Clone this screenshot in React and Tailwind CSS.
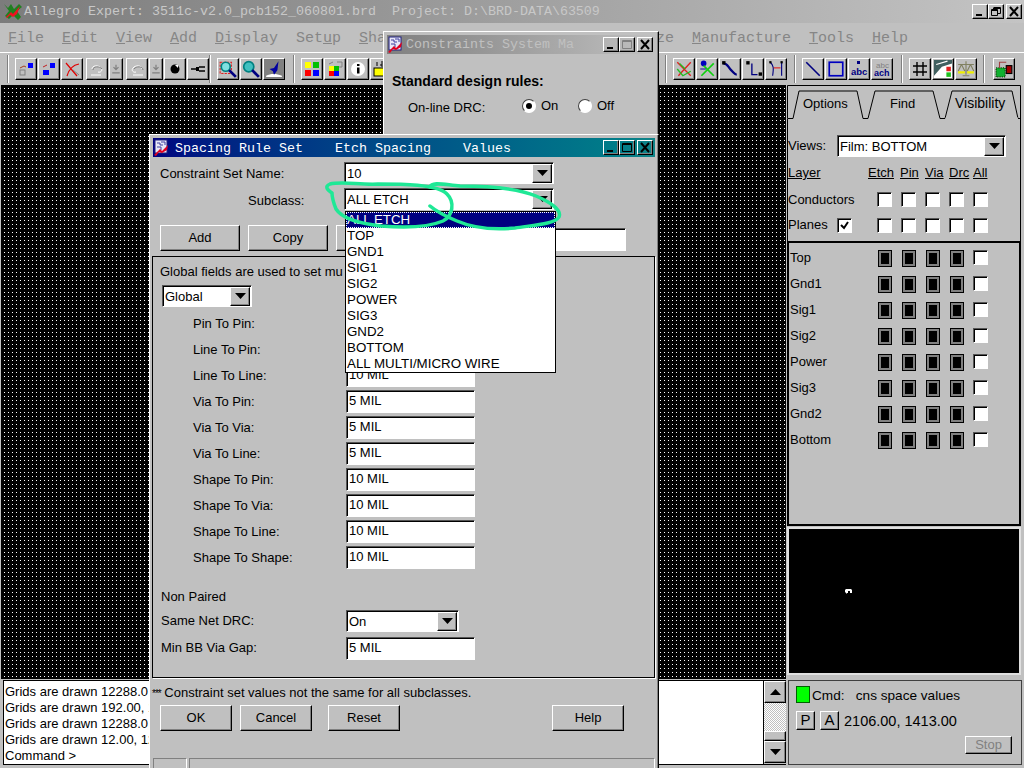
import React from 'react';

const raised = 'border border-t-white border-l-white border-r-black border-b-black shadow-[inset_-1px_-1px_0_#808080]';
const sunken = 'border border-t-[#555555] border-l-[#555555] border-r-white border-b-white shadow-[inset_1px_1px_0_#000000]';
const mono = "font-['Liberation_Mono',monospace]";

// the dialogs cover the middle of the menu, so only what shows is written out
const MENU = [
  ['File', 36], ['Edit', 36], ['View', 36], ['Add', 27], ['Display', 63], ['Setup', 45], ['Sha', 45], ['', 45], ['', 45], ['', 45], ['ze', 63],
  ['Manufacture', 99], ['Tools', 45], ['Help', 36],
];
const LAYERS = ['Top', 'Gnd1', 'Sig1', 'Sig2', 'Power', 'Sig3', 'Gnd2', 'Bottom'];
const SUBCLASSES = ['TOP', 'GND1', 'SIG1', 'SIG2', 'POWER', 'SIG3', 'GND2', 'BOTTOM', 'ALL MULTI/MICRO WIRE'];
const RULES = [
  ['Pin To Pin:', ''], ['Line To Pin:', ''], ['Line To Line:', '10 MIL'], ['Via To Pin:', '5 MIL'], ['Via To Via:', '5 MIL'],
  ['Via To Line:', '5 MIL'], ['Shape To Pin:', '10 MIL'], ['Shape To Via:', '10 MIL'], ['Shape To Line:', '10 MIL'], ['Shape To Shape:', '10 MIL'],
];
const LOG = ['Grids are drawn 12288.0', 'Grids are drawn 192.00, 1', 'Grids are drawn 12288.0', 'Grids are drawn 12.00, 12'];

function Ico({ children, size = 16 }) {
  return <svg width={size} height={size} viewBox="0 0 16 16" fill="none">{children}</svg>;
}

function Tool({ children, narrow, flat }) {
  return (
    <div className={`${narrow ? 'w-[14px]' : 'w-[22px]'} h-[22px] shrink-0 flex items-center justify-center ${raised} ${flat ? 'bg-[#808080]' : ''}`}>
      {children}
    </div>
  );
}

function Group({ w, children }) {
  return (
    <div style={{ width: w }} className="h-[28px] shrink-0 pl-[7px] flex items-center gap-px border-l border-l-[#808080] shadow-[inset_1px_0_0_#ffffff]">
      {children}
    </div>
  );
}

function WinBtn({ type, dim }) {
  const c = dim ? '#808080' : '#000000';
  return (
    <div className={`w-[16px] h-[15px] shrink-0 flex items-center justify-center ${raised}`}>
      <svg width="12" height="11" viewBox="0 0 12 11" fill="none">
        {type === 'min' && <rect x="2" y="8" width="6" height="2" fill="#000000" />}
        {type === 'max' && <path d="M1.5 1.5h9v8h-9zM1 2.5h10" stroke={c} />}
        {type === 'restore' && <path d="M3.5 1.5h7v6h-3M3 2.5h8M1.5 3.5h6v6h-6zM1 4.5h7" stroke="#000000" />}
        {type === 'close' && <path d="M2 1l8 9M10 1l-8 9" stroke="#000000" strokeWidth="2" />}
      </svg>
    </div>
  );
}

function DocIcon() {
  return (
    <svg width="18" height="18" viewBox="0 0 18 18" className="shrink-0">
      <rect x="2" y="1" width="12" height="13" fill="#e8e8f8" stroke="#202080" />
      <path d="M4 4h3v2h3M8 3h4v3M4 8h4v3" stroke="#4040a0" fill="none" />
      <path d="M1 16l6-6 2 2 6-6-1 5-5 3-3-1-3 4z" fill="#e00020" />
    </svg>
  );
}

function Arrow({ up }) {
  return (
    <svg width="11" height="6" viewBox="0 0 11 6">
      <path d={up ? 'M5.5 0L11 6H0z' : 'M0 0h11L5.5 6z'} fill="#000000" />
    </svg>
  );
}

function Combo({ w, value }) {
  return (
    <div style={{ width: w }} className={`h-[22px] shrink-0 bg-white flex items-center justify-between pl-[2px] pr-px ${sunken}`}>
      <span className="leading-none">{value}</span>
      <div className={`w-[20px] h-[19px] bg-[#c0c0c0] flex items-center justify-center ${raised}`}>
        <Arrow />
      </div>
    </div>
  );
}

function Btn({ w, children, className = '' }) {
  return (
    <div style={{ width: w }} className={`h-[26px] shrink-0 flex items-center justify-center ${raised} ${className}`}>
      {children}
    </div>
  );
}

function Check({ on }) {
  return (
    <div className={`w-[15px] h-[15px] shrink-0 bg-white flex items-center justify-center ${sunken}`}>
      {on && (
        <svg width="9" height="9" viewBox="0 0 9 9"><path d="M1 4l3 3 4-6" stroke="#000000" strokeWidth="2" fill="none" /></svg>
      )}
    </div>
  );
}

function Radio({ on }) {
  return (
    <div className="w-[14px] h-[14px] rounded-full bg-white border border-t-[#404040] border-l-[#404040] border-r-white border-b-white flex items-center justify-center">
      {on && <div className="w-[6px] h-[6px] rounded-full bg-black" />}
    </div>
  );
}

function ColorBox() {
  return (
    <div className="w-[14px] h-[17px] shrink-0 border border-black bg-[#808080] p-[2px]">
      <div className="w-full h-full bg-black" />
    </div>
  );
}

function MainToolbar() {
  return (
    <div className="h-[33px] flex items-center border-t border-t-white pl-[7px]">
      <Group w={202}>
        <Tool><Ico><rect x="10" y="2" width="5" height="5" fill="#0000ff" /><rect x="2" y="9" width="5" height="5" stroke="#808080" /><path d="M2 7l4-2 2 1" stroke="#a04020" /></Ico></Tool>
        <Tool><Ico><rect x="9" y="2" width="5" height="5" fill="#0000ff" /><rect x="2" y="9" width="6" height="5" fill="#0000ff" /><path d="M2 6l4-2" stroke="#c02020" /></Ico></Tool>
        <Tool><Ico><path d="M2 2l11 13M15 3C9 4 5 8 3 15" stroke="#e00000" strokeWidth="1.2" /><path d="M9 9l6 5" stroke="#808080" /></Ico></Tool>
        <div className="w-px" />
        <Tool><Ico><path d="M3 8c0-4 7-4 9-1 2 2 0 5-3 4M2 14h10" stroke="#ffffff" /><path d="M3 8c0-4 7-4 9-1" stroke="#808080" transform="translate(1 1)" /></Ico></Tool>
        <Tool narrow><Ico size={10}><path d="M8 1v7M4 5l4 4 4-4M2 14h12" stroke="#808080" strokeWidth="2" /></Ico></Tool>
        <div className="w-px" />
        <Tool><Ico><path d="M13 8c0-4-7-4-9-1-2 2 0 5 3 4M4 14h10" stroke="#ffffff" /><path d="M13 8c0-4-7-4-9-1" stroke="#808080" transform="translate(1 1)" /></Ico></Tool>
        <Tool narrow><Ico size={10}><path d="M8 1v7M4 5l4 4 4-4M2 14h12" stroke="#808080" strokeWidth="2" /></Ico></Tool>
        <Tool><Ico><circle cx="8" cy="8" r="4.5" fill="#000000" /><path d="M8 4h3v3z" fill="#ffffff" /></Ico></Tool>
        <Tool><Ico><path d="M1 8h5M9 6h6M9 10h6" stroke="#000000" strokeWidth="1.5" /><rect x="6" y="6" width="3" height="4" fill="#000000" /></Ico></Tool>
      </Group>
      <Group w={84}>
        <Tool><Ico size={18}><rect x="1" y="2" width="10" height="10" stroke="#e02020" strokeDasharray="2 1" /><circle cx="6" cy="6" r="4" stroke="#008080" strokeWidth="1.5" fill="#80e0e0" /><path d="M9 9l6 6" stroke="#000080" strokeWidth="2.5" /></Ico></Tool>
        <Tool><Ico size={18}><circle cx="6" cy="6" r="4.5" stroke="#008080" strokeWidth="1.5" fill="#40c0c0" /><path d="M9 9l6 6" stroke="#000080" strokeWidth="2.5" /></Ico></Tool>
        <Tool flat><Ico size={18}><path d="M1 14c4-2 9-2 14 0v1H1z" fill="#ffffff" /><path d="M12 1L8 7l-4 1 3 2 1 3 3-4z" fill="#0000a0" /></Ico></Tool>
      </Group>
      <Group w={372}>
        <Tool><Ico><rect x="1" y="1" width="6" height="6" fill="#ffff00" /><rect x="9" y="1" width="6" height="6" fill="#00c000" /><rect x="1" y="9" width="6" height="6" fill="#ff0000" /><rect x="9" y="9" width="6" height="6" fill="#0000ff" /></Ico></Tool>
        <Tool><Ico><rect x="2" y="5" width="5" height="5" fill="#ffff00" /><rect x="7" y="5" width="5" height="5" fill="#00c000" /><rect x="2" y="10" width="5" height="5" fill="#ff0000" /><rect x="7" y="10" width="5" height="5" fill="#0000ff" /><path d="M2 3l4-2M10 1h5v5h-3" stroke="#808080" /></Ico></Tool>
        <Tool><Ico><circle cx="8" cy="8" r="7" fill="#ffffff" /><rect x="7" y="3" width="2.5" height="2" fill="#000000" /><rect x="7" y="6.5" width="2.5" height="6" fill="#000000" /></Ico></Tool>
        <Tool><Ico><rect x="1" y="7" width="14" height="8" fill="#ffff00" stroke="#000000" /><path d="M4 1v4M8 1h3v2H8v2h3" stroke="#000000" /></Ico></Tool>
      </Group>
      <Group w={129}>
        <Tool><Ico size={18}><path d="M2 2l12 12M14 2L3 14" stroke="#e02020" strokeWidth="1.2" /><path d="M2 8l5 6 7-4M4 3l5 5" stroke="#20c020" strokeWidth="1.2" /></Ico></Tool>
        <Tool><Ico size={18}><circle cx="5" cy="3" r="2.5" fill="#0000c0" /><path d="M3 14L14 3M5 5l9 9" stroke="#10d010" strokeWidth="1.5" /><path d="M2 8h5" stroke="#2020a0" /></Ico></Tool>
        <Tool><Ico size={18}><path d="M2 3c4 0 4 3 7 6s3 4 5 4" stroke="#000080" strokeWidth="2" /><rect x="1" y="1" width="3" height="3" fill="#000000" /></Ico></Tool>
        <Tool><Ico size={18}><rect x="2" y="1" width="3" height="3" fill="#000000" /><path d="M7 3v10h5" stroke="#000080" strokeWidth="1.2" /><rect x="13" y="11" width="3" height="3" fill="#000000" /></Ico></Tool>
        <Tool><Ico size={18}><path d="M3 2c3 3 3 5 2 12M13 2v12" stroke="#000080" /><path d="M6 7h6" stroke="#e02020" /><rect x="2" y="1" width="2" height="2" fill="#000000" /><rect x="12" y="1" width="2" height="2" fill="#000000" /></Ico></Tool>
      </Group>
      <Group w={107}>
        <Tool><Ico size={18}><path d="M2 2l12 12" stroke="#000080" strokeWidth="1.4" /></Ico></Tool>
        <Tool><Ico size={18}><rect x="2" y="2" width="12" height="12" stroke="#0000c0" strokeWidth="1.5" /></Ico></Tool>
        <Tool><svg width="18" height="18" viewBox="0 0 18 18"><rect x="7" y="1" width="3" height="3" fill="#000080" /><text x="1" y="15" fontSize="9.5" fontWeight="700" fontFamily="Liberation Sans" fill="#000080">abc</text></svg></Tool>
        <Tool><svg width="18" height="18" viewBox="0 0 18 18"><text x="3" y="8" fontSize="8" fontFamily="Liberation Sans" fill="#808080">abc</text><text x="1" y="16" fontSize="9" fontWeight="700" fontFamily="Liberation Sans" fill="#000080">ach</text></svg></Tool>
      </Group>
      <Group w={82}>
        <Tool><Ico><path d="M5 1v14M11 1v14M1 5h14M1 11h14" stroke="#000000" strokeWidth="1.4" /></Ico></Tool>
        <Tool><Ico size={18}><rect x="0" y="0" width="16" height="16" fill="#ffffff" /><path d="M0 0h16v3l-9 3-7 8z" fill="#406060" /><path d="M2 4l10-3" stroke="#ffffff" /><rect x="11" y="6" width="4" height="4" fill="#e02020" /><rect x="11" y="11" width="4" height="4" fill="#20c020" /></Ico></Tool>
        <Tool><Ico size={18}><path d="M8 1v12M5 14h6M1 4h14M4 4l-3 6M4 4l3 6M12 4l-3 6M12 4l3 6" stroke="#808060" /><path d="M1 10h6v2H1zM9 10h6v2H9z" fill="#f0f000" /></Ico></Tool>
      </Group>
      <Group w={40}>
        <div className="w-px" />
        <Tool><Ico size={18}><rect x="1" y="7" width="8" height="8" fill="#10b030" stroke="#004000" strokeDasharray="1 1" /><rect x="10" y="5" width="5" height="7" fill="#a00000" stroke="#000000" /><path d="M4 7V2h6" stroke="#a04040" /></Ico></Tool>
      </Group>
    </div>
  );
}

function VisibilityPanel() {
  return (
    <div className="w-[238px] shrink-0 flex flex-col pl-px pr-[3px]">
      {/* tabs */}
      <div className="relative h-[34px] shrink-0">
        <svg className="absolute inset-0" width="234" height="34" viewBox="0 0 234 34" fill="none">
          <path d="M0.5 33.5H6L12 6H70L76 33.5H81L88 6H146L153 33.5H158L165 6H225L231 33.5H234" stroke="#000000" />
          <path d="M0.5 33.5V0.5H233.5V34" stroke="#000000" />
          <path d="M158.5 33.5H231" stroke="#c0c0c0" strokeWidth="2" />
        </svg>
        <div className="relative flex h-full pt-[9px] items-start">
          <span className="w-[78px] pl-[16px]">Options</span>
          <span className="w-[76px] pl-[25px]">Find</span>
          <span className="pl-[14px] text-[14px] leading-[18px]">Visibility</span>
        </div>
      </div>
      {/* filters */}
      <div className="h-[122px] shrink-0 border-x border-x-black pt-[16px] flex flex-col">
        <div className="flex items-center h-[22px]">
          <span className="w-[49px] shrink-0">Views:</span>
          <Combo w={169} value="Film: BOTTOM" />
        </div>
        <div className="flex items-center h-[26px] mt-[3px] underline">
          <span className="w-[80px]">Layer</span>
          <span className="w-[32px]">Etch</span>
          <span className="w-[25px]">Pin</span>
          <span className="w-[24px]">Via</span>
          <span className="w-[24px]">Drc</span>
          <span>All</span>
        </div>
        <div className="flex items-center h-[26px] pt-px">
          <span className="w-[89px] shrink-0">Conductors</span>
          <div className="flex gap-[9px]"><Check /><Check /><Check /><Check /><Check /></div>
        </div>
        <div className="flex items-center h-[26px]">
          <span className="w-[49px] shrink-0">Planes</span>
          <div className="w-[40px]"><Check on /></div>
          <div className="flex gap-[9px]"><Check /><Check /><Check /><Check /><Check /></div>
        </div>
      </div>
      {/* layer rows */}
      <div className="h-[285px] shrink-0 border-2 border-black pt-[2px]">
        {LAYERS.map((l) => (
          <div key={l} className="flex items-center h-[26px]">
            <span className="w-[89px] shrink-0 pl-px">{l}</span>
            <div className="flex gap-[10px]">
              <ColorBox /><ColorBox /><ColorBox /><ColorBox />
              <div className="-ml-px"><Check /></div>
            </div>
          </div>
        ))}
      </div>
      {/* overview */}
      <div className="relative h-[148px] mt-px shrink-0 bg-black border-2 border-[#e0e0e0]">
        <svg className="absolute left-[56px] top-[60px]" width="7" height="5" viewBox="0 0 7 5"><path d="M1 0h5l1 1v3H5V2H3v2H2v1L0 3V1z" fill="#ffffff" /></svg>
      </div>
    </div>
  );
}

function BottomBar() {
  return (
    <div className="flex flex-1 min-h-0 pt-px pb-[3px]">
      <div className="w-[761px] ml-[3px] shrink-0 bg-white border border-t-black border-l-black border-b-black pl-px pt-[3px] leading-[16px]">
        {LOG.map((t, i) => <div key={i} className="h-[16px]">{t}</div>)}
        <div className="h-[16px]">Command &gt;</div>
      </div>
      <div className="w-[22px] shrink-0 flex flex-col border-y border-y-black">
        <div className={`h-[22px] flex items-center justify-center ${raised}`}><Arrow up /></div>
        <div className="h-[28px] bg-[repeating-conic-gradient(#c0c0c0_0_25%,#ffffff_0_50%)] bg-[length:2px_2px]" />
        <div className={`h-[10px] ${raised}`} />
        <div className={`h-[22px] flex items-center justify-center ${raised}`}><Arrow /></div>
      </div>
      <div className="ml-[2px] flex-1 mr-[2px] border border-[#404040] pl-[7px] pt-[5px]">
        <div className="flex items-center h-[17px]">
          <div className="w-[14px] h-[17px] bg-[#00ff00] border border-[#006000]" />
          <span className="ml-[2px] pt-[3px] whitespace-pre text-[13.6px]">{'Cmd:   cns space values'}</span>
        </div>
        <div className="flex items-center mt-[8px] h-[19px]">
          <div className={`w-[19px] h-[19px] flex items-center justify-center text-[15px] ${raised}`}>P</div>
          <div className={`w-[19px] h-[19px] ml-[5px] flex items-center justify-center text-[15px] ${raised}`}>A</div>
          <span className="ml-[5px] pt-[2px] text-[14.5px]">2106.00, 1413.00</span>
        </div>
        <div className="flex justify-end pr-[9px] mt-[6px]">
          <div className={`w-[47px] h-[18px] flex items-center justify-center text-[#808080] ${raised}`}>Stop</div>
        </div>
      </div>
    </div>
  );
}

function ConstraintsDialog() {
  return (
    <div className={`absolute left-[383px] top-[31px] w-[276px] h-[130px] bg-[#c0c0c0] p-[3px] ${raised}`}>
      <div className="h-[19px] flex items-center bg-linear-to-r from-[#808080] to-[#c0c0c0] pr-[2px]">
        <DocIcon />
        <span className={`ml-px flex-1 overflow-hidden whitespace-nowrap text-[13.33px] text-[#c0c0c0] ${mono}`}>Constraints System Ma</span>
        <WinBtn type="min" />
        <WinBtn type="max" dim />
        <div className="w-[2px]" />
        <WinBtn type="close" />
      </div>
      <div className="pl-[5px] pt-[19px] text-[14px] font-bold leading-[16px]">Standard design rules:</div>
      <div className="flex items-center pl-[21px] mt-[9px] h-[16px]">
        <span className="w-[114px] pt-[4px]">On-line DRC:</span>
        <Radio on />
        <span className="ml-[5px] w-[37px]">On</span>
        <Radio />
        <span className="ml-[5px]">Off</span>
      </div>
    </div>
  );
}

function SpacingDialog() {
  return (
    <div className={`absolute left-[149px] top-[134px] w-[510px] h-[640px] bg-[#c0c0c0] p-[3px] ${raised}`}>
      <div className="h-[19px] flex items-center bg-linear-to-r from-[#000080] to-[#108488] pr-[2px]">
        <DocIcon />
        <span className={`ml-[4px] pt-[2px] flex-1 whitespace-pre text-[13.33px] text-white ${mono}`}>{'Spacing Rule Set    Etch Spacing    Values'}</span>
        <WinBtn type="min" />
        <WinBtn type="max" />
        <div className="w-[2px]" />
        <WinBtn type="close" />
      </div>

      <div className="flex items-center h-[22px] mt-[5px] pl-[7px]">
        <span className="w-[184px] shrink-0 pt-[2px]">Constraint Set Name:</span>
        <Combo w={210} value="10" />
      </div>
      <div className="flex items-center h-[22px] mt-[4px] pl-[95px]">
        <span className="w-[96px] shrink-0 pt-[3px]">Subclass:</span>
        <Combo w={210} value="ALL ETCH" />
      </div>
      <div className="flex items-center gap-2 h-[26px] mt-[15px] pl-[7px]">
        <Btn w={80}>Add</Btn>
        <Btn w={80}>Copy</Btn>
        <Btn w={80} />
        <div className={`w-[202px] h-[23px] mt-[3px] bg-white ${sunken}`} />
      </div>

      <div className="h-[422px] mt-[5px] -ml-px border border-black shadow-[1px_1px_0_#ffffff]">
        <div className="pl-[7px] pt-[7px] h-[22px] leading-[16px] whitespace-nowrap overflow-hidden">Global fields are used to set mu</div>
        <div className="ml-[9px] mt-[6px]"><Combo w={90} value="Global" /></div>
        <div className="mt-[3px]">
          {RULES.map(([label, val]) => (
            <div key={label} className="flex items-center h-[26px] pl-[40px]">
              <span className="w-[153px] shrink-0 pt-[2px]">{label}</span>
              <div className={`w-[129px] h-[23px] bg-white pl-[2px] flex items-center ${sunken}`}>{val}</div>
            </div>
          ))}
        </div>
        <div className="pl-[8px] pt-px mt-[18px] h-[16px] leading-[16px]">Non Paired</div>
        <div className="flex items-center pl-[8px] mt-[6px] h-[22px]">
          <span className="w-[185px] shrink-0">Same Net DRC:</span>
          <Combo w={113} value="On" />
        </div>
        <div className="flex items-center pl-[8px] mt-[5px] h-[22px]">
          <span className="w-[185px] shrink-0">Min BB Via Gap:</span>
          <div className={`w-[129px] h-[23px] bg-white pl-[2px] flex items-center ${sunken}`}>5 MIL</div>
        </div>
      </div>

      <div className="mt-[6px] pt-px h-[16px] leading-[16px] -ml-px whitespace-nowrap">
        <span className="text-[10px] tracking-[-1px]">***</span> Constraint set values not the same for all subclasses.
      </div>
      <div className="flex mt-[5px] pl-[7px]">
        <Btn w={72} className="shadow-[inset_-1px_-1px_0_#808080,1px_1px_0_#000000]">OK</Btn>
        <Btn w={72} className="ml-2">Cancel</Btn>
        <Btn w={72} className="ml-4">Reset</Btn>
        <Btn w={72} className="ml-[152px]">Help</Btn>
      </div>
      <div className="flex gap-[2px] mt-[27px] h-[14px]">
        <div className="w-[34px] border border-t-[#808080] border-l-[#808080] border-r-white border-b-white" />
        <div className="flex-1 border border-t-[#808080] border-l-[#808080] border-r-white border-b-white" />
      </div>

      {/* open subclass list */}
      <div className="absolute left-[195px] top-[76px] w-[211px] h-[162px] bg-white border border-black leading-[16px] text-[13.33px] pl-px overflow-hidden">
        <div className="h-[16px] -ml-px pl-px bg-[#000080] text-white outline-1 -outline-offset-1 outline-dotted outline-white">ALL ETCH</div>
        {SUBCLASSES.map((s) => <div key={s} className="h-[16px] whitespace-nowrap">{s}</div>)}
      </div>
    </div>
  );
}

export default function App() {
  return (
    <div className="relative w-[1024px] h-[768px] overflow-hidden flex flex-col bg-[#c0c0c0] text-black text-[13px] font-['Liberation_Sans',Arial,sans-serif]">
      <div className="h-[23px] shrink-0 flex items-center bg-linear-to-r from-[#7c7c7c] to-[#c4c4c4] pl-[3px] pr-[2px]">
        <svg width="20" height="19" viewBox="0 0 20 19" className="shrink-0">
          <path d="M1 2l4 4 3-4 3 5 5-5 3 3-5 4 4 6-3 3-5-5-4 4-4-3 4-5z" fill="#208020" />
          <path d="M3 15l5-5 2 2 7-8-3 8-4 3-3-2-3 3z" fill="#f01020" />
        </svg>
        <span className={`ml-px flex-1 whitespace-pre text-[13.33px] text-[#c8c8c8] ${mono}`}>{'Allegro Expert: 3511c-v2.0_pcb152_060801.brd  Project: D:\\BRD-DATA\\63509'}</span>
        <WinBtn type="min" />
        <WinBtn type="restore" />
        <div className="w-[2px]" />
        <WinBtn type="close" />
      </div>

      <div className={`h-[29px] shrink-0 flex items-center gap-[18px] pl-[8px] pt-[4px] text-[15px] text-[#868686] ${mono}`}>
        {MENU.map(([m, w], i) => (
          <span key={i} style={{ width: w }} className="shrink-0 text-right whitespace-nowrap">
            {m === 'Setup' ? <>Set<u>u</u>p</> : m === 'ze' ? m : <><u>{m[0]}</u>{m.slice(1)}</>}
            {m === 'Sha' && <span className="invisible">pe</span>}
          </span>
        ))}
      </div>

      <MainToolbar />

      <div className="h-[594px] shrink-0 flex">
        <div className="flex-1 ml-px bg-[linear-gradient(#000000_3px,transparent_3px),linear-gradient(90deg,#000000_3px,#ffffff_3px)] bg-[length:4px_4px]" />
        <VisibilityPanel />
      </div>

      <BottomBar />

      <ConstraintsDialog />
      <SpacingDialog />

      {/* hand-drawn green marks over the subclass field */}
      <svg className="absolute left-0 top-0 pointer-events-none" width="1024" height="768" viewBox="0 0 1024 768" fill="none">
        <path d="M332 193c-6-4-7-7-2-9 12-3 30 1 48 0 22 0 60 0 69 10 8 8 6 22-4 27-14 6-38 7-62 5-18-2-38-6-45-17-2-5-4-10-4-16" stroke="#1fe896" strokeWidth="3.5" strokeLinecap="round" />
        <path d="M430 187c2-6 16-2 30-1 26 0 56 2 76 10 14 6 26 14 23 21-4 7-24 8-44 11-22 2-42 0-58-7-12-5-20-9-27-15" stroke="#1fe896" strokeWidth="3.5" strokeLinecap="round" />
      </svg>
    </div>
  );
}
